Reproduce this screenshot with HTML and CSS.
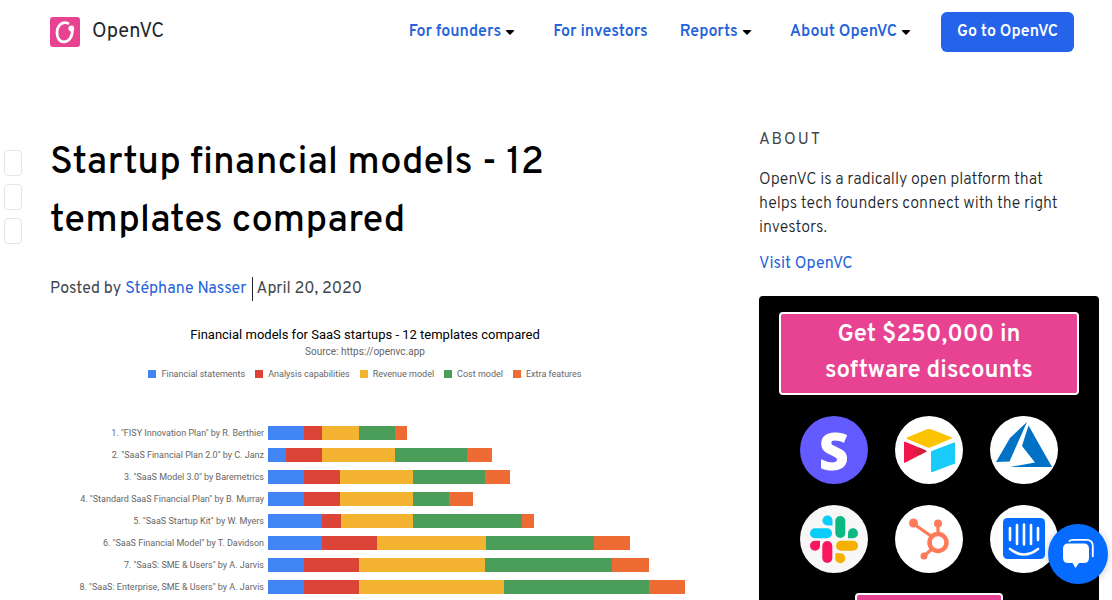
FILE: index.html
```html
<!DOCTYPE html>
<html lang="en">
<head>
<meta charset="utf-8">
<meta name="viewport" content="width=device-width, initial-scale=1">
<title>Startup financial models - 12 templates compared</title>
<link rel="stylesheet" href="styles.css">
</head>
<body>
<header class="site-header">
  <a class="brand" href="#">
    <svg class="brand-mark" viewBox="0 0 30 30" aria-hidden="true"><rect width="30" height="30" rx="3" fill="#e84393"/><path d="M18 6.3C12 3.8 7 9 7 16c0 6 3.300 9 7.200 8.800C20 24.500 23.200 18 22 11" fill="none" stroke="#fff" stroke-width="2.800" stroke-linecap="round"/><circle cx="21.300" cy="11.300" r="2.900" fill="#fff"/></svg>
    <span>OpenVC</span>
  </a>
  <nav class="main-nav">
    <button class="nav-item has-menu" type="button">For founders</button>
    <a class="nav-item" href="#">For investors</a>
    <button class="nav-item has-menu" type="button">Reports</button>
    <button class="nav-item has-menu" type="button">About OpenVC</button>
    <a class="cta" href="#">Go to OpenVC</a>
  </nav>
</header>

<div class="layout">
  <div class="share-rail">
    <button type="button" aria-label="Share on Twitter"></button>
    <button type="button" aria-label="Share on LinkedIn"></button>
    <button type="button" aria-label="Share on Facebook"></button>
  </div>

  <main class="article">
    <h1>Startup financial models - 12 templates compared</h1>
    <p class="byline">Posted by <a href="#">Stéphane Nasser</a> <span class="divider"></span> April 20, 2020</p>

    <figure class="chart">
      <figcaption class="chart-head">
        <div class="chart-title">Financial models for SaaS startups - 12 templates compared</div>
        <div class="chart-source">Source: https://openvc.app</div>
        <ul class="legend">
          <li><i class="blue"></i>Financial statements</li>
          <li><i class="red"></i>Analysis capabilities</li>
          <li><i class="yellow"></i>Revenue model</li>
          <li><i class="green"></i>Cost model</li>
          <li><i class="orange"></i>Extra features</li>
        </ul>
      </figcaption>
      <div class="rows">
        <span>1. "FISY Innovation Plan" by R. Berthier</span>
        <div class="bar"><i class="blue" style="width:8.33%"></i><i class="red" style="width:4.17%"></i><i class="yellow" style="width:8.33%"></i><i class="green" style="width:8.33%"></i><i class="orange" style="width:2.78%"></i></div>
        <span>2. "SaaS Financial Plan 2.0" by C. Janz</span>
        <div class="bar"><i class="blue" style="width:4.17%"></i><i class="red" style="width:8.33%"></i><i class="yellow" style="width:16.67%"></i><i class="green" style="width:16.67%"></i><i class="orange" style="width:5.56%"></i></div>
        <span>3. "SaaS Model 3.0" by Baremetrics</span>
        <div class="bar"><i class="blue" style="width:8.33%"></i><i class="red" style="width:8.33%"></i><i class="yellow" style="width:16.67%"></i><i class="green" style="width:16.67%"></i><i class="orange" style="width:5.56%"></i></div>
        <span>4. "Standard SaaS Financial Plan" by B. Murray</span>
        <div class="bar"><i class="blue" style="width:8.33%"></i><i class="red" style="width:8.33%"></i><i class="yellow" style="width:16.67%"></i><i class="green" style="width:8.33%"></i><i class="orange" style="width:5.56%"></i></div>
        <span>5. "SaaS Startup Kit" by W. Myers</span>
        <div class="bar"><i class="blue" style="width:12.5%"></i><i class="red" style="width:4.17%"></i><i class="yellow" style="width:16.67%"></i><i class="green" style="width:25%"></i><i class="orange" style="width:2.78%"></i></div>
        <span>6. "SaaS Financial Model" by T. Davidson</span>
        <div class="bar"><i class="blue" style="width:12.5%"></i><i class="red" style="width:12.5%"></i><i class="yellow" style="width:25%"></i><i class="green" style="width:25%"></i><i class="orange" style="width:8.33%"></i></div>
        <span>7. "SaaS: SME &amp; Users" by A. Jarvis</span>
        <div class="bar"><i class="blue" style="width:8.33%"></i><i class="red" style="width:12.5%"></i><i class="yellow" style="width:29.17%"></i><i class="green" style="width:29.17%"></i><i class="orange" style="width:8.33%"></i></div>
        <span>8. "SaaS: Enterprise, SME &amp; Users" by A. Jarvis</span>
        <div class="bar"><i class="blue" style="width:8.33%"></i><i class="red" style="width:12.5%"></i><i class="yellow" style="width:33.33%"></i><i class="green" style="width:33.33%"></i><i class="orange" style="width:8.33%"></i></div>
      </div>
    </figure>
  </main>

  <aside class="sidebar">
    <h2>About</h2>
    <p>OpenVC is a radically open platform that helps tech founders connect with the right investors.</p>
    <a class="visit" href="#">Visit OpenVC</a>
    <section class="deals">
      <a class="deal-button" href="#">Get $250,000 in software discounts</a>
      <div class="logos">
        <span class="logo stripe" role="img" aria-label="Stripe">S</span>
        <svg class="logo" viewBox="0 0 68 68" role="img" aria-label="Airtable"><circle cx="34" cy="34" r="34" fill="#fff"/><path d="M12 21.500 32 13.300q2-.7 4 0l20.500 7.900q1 .7 0 1.300L36 31.300q-2 .7-4 0L12 23q-1-.7 0-1.500z" fill="#fcc400"/><path d="M36 35.200 59 26.500q1-.3 1 .7V47.500L37 56.200q-1 .2-1-.8z" fill="#18cbf9"/><path d="M9 26.500q0-1.300 1.200-.8L31 34.500q1 .7 0 1.300L10.500 46.500Q9 47 9 45.800z" fill="#f0184a"/><path d="M24 31.600 31 34.500q1 .7 0 1.300L25 39l-6-1.800z" fill="#cf2138"/></svg>
        <svg class="logo" viewBox="0 0 68 68" role="img" aria-label="Azure"><circle cx="34" cy="34" r="34" fill="#fff"/><path d="M37 6 19.500 45.500 6 46 20 22z" fill="#0072c6"/><path d="M38.500 9.500 62 51H20l25-4.500L32 30z" fill="#0072c6"/></svg>
        <svg class="logo" viewBox="0 0 68 68" role="img" aria-label="Slack"><circle cx="34" cy="34" r="34" fill="#f7f7f7"/><g stroke-width="10" stroke-linecap="round"><path d="M15 28.300h12" stroke="#08cdfa"/><path d="M40.300 16v12" stroke="#0db982"/><path d="M27.300 41v12" stroke="#fa155d"/><path d="M41 40.700h12" stroke="#f5b000"/></g><path d="M32.500 20.500h-5a5 5 0 1 1 5-5z" fill="#08cdfa"/><path d="M48 33.200v-5a5 5 0 1 1 5 5z" fill="#0db982"/><path d="M20 35.700v5a5 5 0 1 1-5-5z" fill="#fa155d"/><path d="M35.300 48.300h5a5 5 0 1 1-5 5z" fill="#f5b000"/></svg>
        <svg class="logo" viewBox="0 0 68 68" role="img" aria-label="HubSpot"><circle cx="34" cy="34" r="34" fill="#fff"/><g fill="none" stroke="#ff7a59"><circle cx="43" cy="37.500" r="8.500" stroke-width="4.500"/><path d="M18 18.500 36 31M43 19v10M37 44l-7 6" stroke-width="3.300"/></g><g fill="#ff7a59"><circle cx="18.500" cy="18" r="4.500"/><circle cx="43" cy="18.500" r="4"/><circle cx="29" cy="51" r="3.500"/></g></svg>
        <svg class="logo" viewBox="0 0 68 68" role="img" aria-label="Intercom"><circle cx="34" cy="34" r="34" fill="#fff"/><rect x="13" y="13" width="42" height="41" rx="4.500" fill="#056cff"/><path d="M20 23v12M27 20v19M34 19.500v20M41 20v19M48 23v12M20 44q14 11 28 0" fill="none" stroke="#fff" stroke-width="2.600" stroke-linecap="round"/></svg>
      </div>
      <a class="deal-button small" href="#" aria-label="Software discounts"></a>
    </section>
  </aside>
</div>

<button class="chat" type="button" aria-label="Open chat">
  <svg viewBox="0 0 60 60" aria-hidden="true"><path d="M21 17.500Q22 15.800 26 15.800h12.500q6 0 6.300 6V33" fill="none" stroke="#fff" stroke-width="1.800"/><path d="M20 19.500h16q5 0 5 5.500v8.500q0 5.500-5 5.500h-5l-3.500 5-3-5H20q-5 0-5-5.500V25q0-5.500 5-5.500z" fill="#fff"/></svg>
</button>
</body>
</html>
```

FILE: styles.css
```css
* {
  box-sizing: border-box;
}

body {
  margin: 0;
  height: 100vh;
  overflow: hidden;
  background: #fff;
  color: #212529;
  font: 16px/24px Overpass, Roboto, sans-serif;
}

a {
  color: #2563d9;
  text-decoration: none;
}

button {
  font: inherit;
  cursor: pointer;
}

.site-header {
  display: flex;
  align-items: center;
  justify-content: space-between;
  height: 64px;
  padding: 0 38px 0 50px;
}

.brand {
  display: flex;
  align-items: center;
  gap: 12px;
  color: #212529;
  font-size: 20px;
}

.brand-mark {
  width: 30px;
  height: 30px;
}

.main-nav {
  display: flex;
  align-items: center;
  font-weight: 600;
}

.nav-item {
  display: flex;
  align-items: center;
  padding: 0 16px;
  border: 0;
  background: none;
  color: #2563d9;
}

.has-menu {
  padding-right: 22px;
}

.has-menu::after {
  content: "";
  margin-left: 4px;
  border: 5px solid transparent;
  border-top-color: #000;
  border-bottom: 0;
  border-radius: 2px;
}

.cta {
  margin-left: 8px;
  padding: 8px 16px;
  border-radius: 6px;
  background: #2563eb;
  color: #fff;
}

.layout {
  display: flex;
  align-items: flex-start;
  padding: 62px 13px 0 4px;
}

.share-rail {
  display: flex;
  flex-direction: column;
  gap: 8px;
  width: 18px;
  margin: 24px 28px 0 0;
}

.share-rail button {
  height: 26px;
  padding: 0;
  border: 1px solid #e6e6e6;
  border-radius: 4px;
  background: #fff;
}

.article {
  flex: 1;
  padding: 9px 56px 0 0;
}

h1 {
  max-width: 560px;
  margin: 0;
  color: #000;
  font-size: 38px;
  font-weight: 500;
  line-height: 58px;
}

.byline {
  display: flex;
  align-items: center;
  gap: 4px;
  margin: 26px 0 0;
  color: #42474b;
}

.divider {
  width: 1px;
  height: 24px;
  margin-left: 1px;
  background: #212529;
}

.chart {
  margin: 25px 0 0;
  color: #666;
  font-family: Roboto, sans-serif;
}

.chart-head {
  padding-right: 23px;
  text-align: center;
}

.chart-title {
  color: #000;
  font-size: 13px;
  line-height: 18px;
}

.chart-source {
  font-size: 10px;
  line-height: 16px;
}

.legend {
  display: flex;
  justify-content: center;
  gap: 10px;
  margin: 8px 0 0;
  padding: 0;
  list-style: none;
  font-size: 9px;
  line-height: 12px;
}

.legend li {
  display: flex;
  align-items: center;
  gap: 5px;
}

.legend i {
  width: 8px;
  height: 8px;
}

.rows {
  display: grid;
  grid-template-columns: 214px 1fr;
  gap: 8px 4px;
  margin-top: 46px;
  font-size: 9px;
  line-height: 14px;
  text-align: right;
}

.bar {
  display: flex;
  height: 14px;
}

.blue { background: #4285f4; }
.red { background: #db4437; }
.yellow { background: #f4b432; }
.green { background: #4b9e59; }
.orange { background: #ee6c33; }

.sidebar {
  width: 340px;
}

.sidebar h2 {
  margin: 0;
  padding-top: 1px;
  color: #42474b;
  font-size: 16px;
  font-weight: 400;
  line-height: 26px;
  letter-spacing: 2px;
  text-transform: uppercase;
}

.sidebar p {
  margin: 15px 0 12px;
  padding-right: 20px;
  font-weight: 300;
}

.deals {
  display: flex;
  flex-direction: column;
  align-items: center;
  margin-top: 20px;
  padding: 16px 20px;
  border-radius: 4px;
  background: #000;
}

.deal-button {
  align-self: stretch;
  padding: 3px 40px 4px;
  border: 2px solid #fff;
  border-radius: 4px;
  background: #e84393;
  color: #fff;
  font-size: 24px;
  font-weight: 600;
  line-height: 36px;
  text-align: center;
}

.deal-button.small {
  align-self: center;
  width: 148px;
  min-height: 47px;
}

.logos {
  display: grid;
  grid-template-columns: repeat(3, 1fr);
  justify-items: center;
  gap: 21px 0;
  align-self: stretch;
  padding: 21px 7px 20px;
}

.logo {
  width: 68px;
  height: 68px;
}

.stripe {
  border-radius: 50%;
  background: #635bff;
  color: #fff;
  font: 800 52px/68px "Open Sans", sans-serif;
  text-align: center;
}

.chat {
  position: fixed;
  right: 4px;
  bottom: 16px;
  width: 60px;
  height: 60px;
  padding: 0;
  border: 0;
  border-radius: 50%;
  background: #056cff;
  box-shadow: 0 1px 8px rgba(0, 0, 0, .2);
}

.chat svg {
  display: block;
}
```
